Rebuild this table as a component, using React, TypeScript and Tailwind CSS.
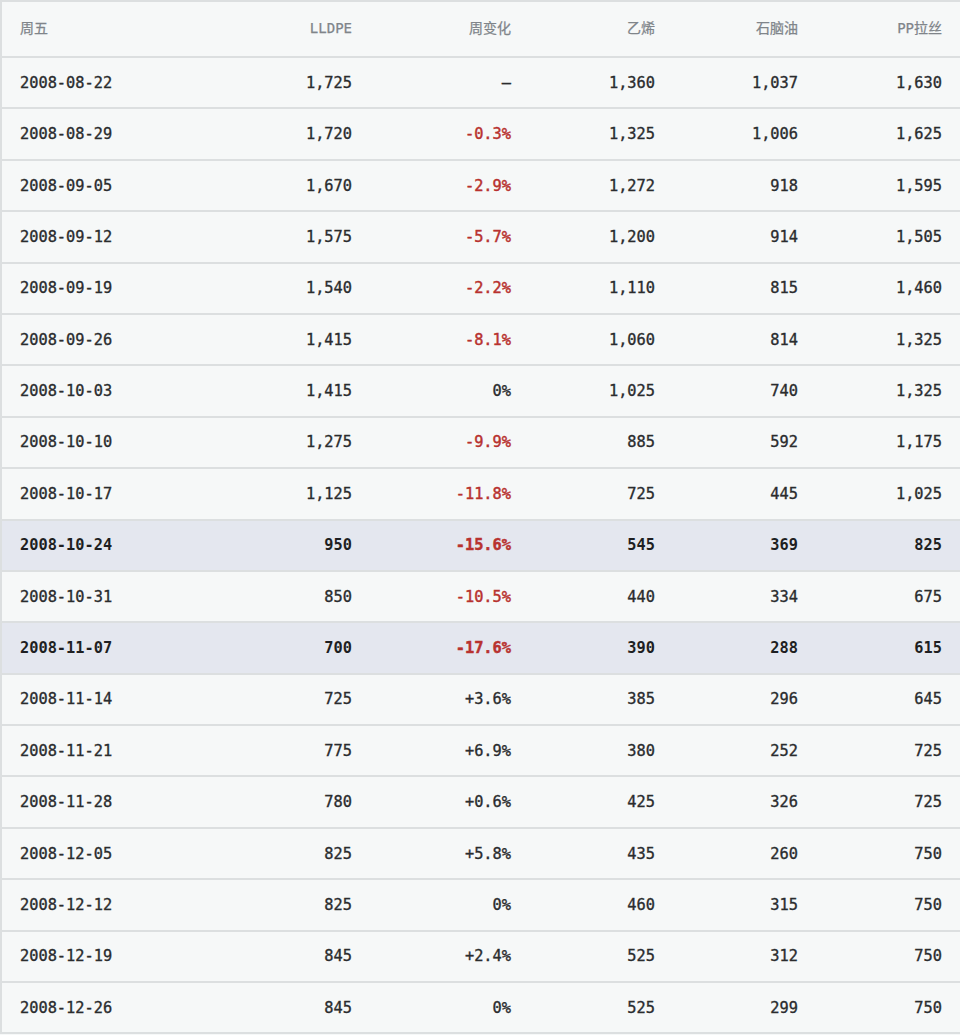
import React from "react";

type Row = { d: string; l: string; c: string; e: string; n: string; p: string; hl?: boolean };

const rows: Row[] = [
  { d: "2008-08-22", l: "1,725", c: "–", e: "1,360", n: "1,037", p: "1,630" },
  { d: "2008-08-29", l: "1,720", c: "-0.3%", e: "1,325", n: "1,006", p: "1,625" },
  { d: "2008-09-05", l: "1,670", c: "-2.9%", e: "1,272", n: "918", p: "1,595" },
  { d: "2008-09-12", l: "1,575", c: "-5.7%", e: "1,200", n: "914", p: "1,505" },
  { d: "2008-09-19", l: "1,540", c: "-2.2%", e: "1,110", n: "815", p: "1,460" },
  { d: "2008-09-26", l: "1,415", c: "-8.1%", e: "1,060", n: "814", p: "1,325" },
  { d: "2008-10-03", l: "1,415", c: "0%", e: "1,025", n: "740", p: "1,325" },
  { d: "2008-10-10", l: "1,275", c: "-9.9%", e: "885", n: "592", p: "1,175" },
  { d: "2008-10-17", l: "1,125", c: "-11.8%", e: "725", n: "445", p: "1,025" },
  { d: "2008-10-24", l: "950", c: "-15.6%", e: "545", n: "369", p: "825", hl: true },
  { d: "2008-10-31", l: "850", c: "-10.5%", e: "440", n: "334", p: "675" },
  { d: "2008-11-07", l: "700", c: "-17.6%", e: "390", n: "288", p: "615", hl: true },
  { d: "2008-11-14", l: "725", c: "+3.6%", e: "385", n: "296", p: "645" },
  { d: "2008-11-21", l: "775", c: "+6.9%", e: "380", n: "252", p: "725" },
  { d: "2008-11-28", l: "780", c: "+0.6%", e: "425", n: "326", p: "725" },
  { d: "2008-12-05", l: "825", c: "+5.8%", e: "435", n: "260", p: "750" },
  { d: "2008-12-12", l: "825", c: "0%", e: "460", n: "315", p: "750" },
  { d: "2008-12-19", l: "845", c: "+2.4%", e: "525", n: "312", p: "750" },
  { d: "2008-12-26", l: "845", c: "0%", e: "525", n: "299", p: "750" },
];

export default function App() {
  return (
    <div className="w-[960px] h-[1035px] bg-[#f6f8f8]">
      <table
        className="w-[960px] border-collapse table-fixed border-2 border-[#dcdfe0] bg-[#f6f8f8]"
        style={{ fontFamily: '"DejaVu Sans Mono", "Noto Sans CJK SC", monospace' }}
      >
        <colgroup>
          <col className="w-[200px]" />
          <col className="w-[169px]" />
          <col className="w-[159px]" />
          <col className="w-[144px]" />
          <col className="w-[143px]" />
          <col className="w-[145px]" />
        </colgroup>
        <thead>
          <tr className="h-[56px] border-b-2 border-[#dcdfe0] text-[14px] text-[#80858a] [-webkit-text-stroke:0.25px]">
            <th className="text-left pl-[18px] pb-[2px] font-normal">周五</th>
            <th className="text-right pr-[18px] pb-[2px] font-normal">LLDPE</th>
            <th className="text-right pr-[18px] pb-[2px] font-normal">周变化</th>
            <th className="text-right pr-[18px] pb-[2px] font-normal">乙烯</th>
            <th className="text-right pr-[18px] pb-[2px] font-normal">石脑油</th>
            <th className="text-right pr-[18px] pb-[2px] font-normal">PP拉丝</th>
          </tr>
        </thead>
        <tbody>
          {rows.map((r) => {
            const neg = r.c.startsWith("-");
            return (
              <tr
                key={r.d}
                className={`h-[51.4px] border-b-2 border-[#dcdfe0] text-[15.3px] ${
                  r.hl
                    ? "bg-[#e4e7ef] font-bold text-[#1e1f22]"
                    : "text-[#2a2c2e] [-webkit-text-stroke:0.35px]"
                }`}
              >
                <td className="text-left pl-[18px] pt-[1px]">{r.d}</td>
                <td className="text-right pr-[18px] pt-[1px]">{r.l}</td>
                <td
                  className={`text-right pr-[18px] pt-[1px] ${
                    neg ? "text-[#b8322f] [-webkit-text-stroke:0.45px]" : ""
                  }`}
                >
                  {r.c}
                </td>
                <td className="text-right pr-[18px] pt-[1px]">{r.e}</td>
                <td className="text-right pr-[18px] pt-[1px]">{r.n}</td>
                <td className="text-right pr-[18px] pt-[1px]">{r.p}</td>
              </tr>
            );
          })}
        </tbody>
      </table>
    </div>
  );
}
